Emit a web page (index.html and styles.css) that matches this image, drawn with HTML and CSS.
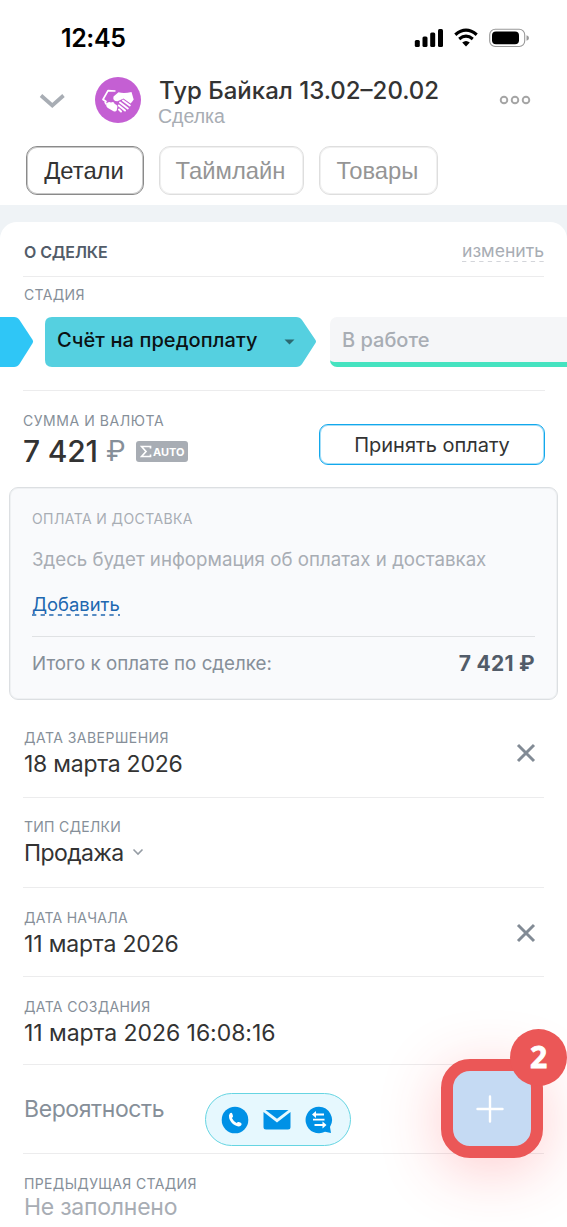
FILE: index.html
```html
<!DOCTYPE html>
<html lang="ru">
<head>
<meta charset="utf-8">
<title>Сделка</title>
<link rel="stylesheet" href="styles.css">
</head>
<body>
<div class="screen">
  <header class="top">
    <div class="status">
      <span class="clock">12:45</span>
      <svg class="status-icons" width="116" height="22" viewBox="0 0 116 22">
        <rect x="0.8" y="13" width="5" height="7" rx="1.5"/>
        <rect x="8.5" y="9.5" width="5" height="10.5" rx="1.5"/>
        <rect x="16.2" y="5.5" width="5" height="14.5" rx="1.5"/>
        <rect x="24" y="2" width="5" height="18" rx="1.5"/>
        <path d="M41.3 7.8Q52 -1.5 62.7 7.8" fill="none" stroke="#000" stroke-width="3.2"/>
        <path d="M45.2 12Q52 6.2 58.8 12" fill="none" stroke="#000" stroke-width="3"/>
        <path d="M48.2 15.6Q52 12.2 55.8 15.6L52 19.6Z"/>
        <rect x="75.7" y="2.2" width="35" height="17.3" rx="5.5" fill="none" stroke="#999" stroke-width="1.1"/>
        <rect x="78" y="4.5" width="27" height="12.8" rx="4"/>
        <path d="M112.5 8.2Q115 9 115 11T112.5 13.8Z" fill="#999"/>
      </svg>
    </div>
    <div class="titlebar">
      <svg class="back" width="26" height="16" viewBox="0 0 26 16"><path d="M2 2.5L13.300 12.500L24.500 2.500" fill="none" stroke="#a8adb4" stroke-width="3.700"/></svg>
      <svg class="avatar" width="46" height="46" viewBox="0 0 46 46">
        <circle cx="23" cy="23" r="23" fill="#c45fd3"/>
        <path d="M11.500 27.500L10.200 25.500L11 24.500L8 22.500L13 13.700L20.500 14" fill="none" stroke="#fff" stroke-width="1.700" stroke-linejoin="round"/>
        <path d="M18.500 19.500L23.500 15.300Q29 17 36.500 15L38.700 22.500Q37.500 24.500 35.500 26.500L28.500 21.500L22.500 24.300Q17.300 24 18.500 19.500Z" fill="#fff"/>
        <path d="M11.300 27.300Q13 24 16 25.500Q19 24 19.700 27Q23.500 28 22 31.500Q22 35.500 18.500 34.200L12.500 30.800Q10.600 29 11.300 27.300Z" fill="#fff"/>
        <path d="M25 25.500L32.800 31.500M28 23.500L34.800 28.500M23.800 28.500L30 33.500M24 32.500L26 34.500" stroke="#fff" stroke-width="2" stroke-linecap="round"/>
      </svg>
      <div class="titles">
        <div class="title"><span>Тур Байкал 13.02–20.02</span></div>
        <div class="subtitle"><span>Сделка</span></div>
      </div>
      <svg class="more" width="32" height="10" viewBox="0 0 32 10" fill="none" stroke="#a5a5a5" stroke-width="1.900"><circle cx="5" cy="5" r="3.300"/><circle cx="16" cy="5" r="3.300"/><circle cx="27" cy="5" r="3.300"/></svg>
    </div>
    <nav class="tabs">
      <div class="tab tab-active"><span>Детали</span></div>
      <div class="tab tab-timeline"><span>Таймлайн</span></div>
      <div class="tab tab-goods"><span>Товары</span></div>
    </nav>
  </header>

  <main class="card">
    <div class="section-head"><span class="section-title">О СДЕЛКЕ</span>
      <span class="edit">изменить<svg class="dash" width="82" height="1"><path d="M0 .5H82" stroke="#d3d5da" stroke-dasharray="4.300 4.300"/></svg></span>
    </div>
    <div class="label stage-label"><span>СТАДИЯ</span></div>
    <div class="stages">
      <svg class="stage-prev" width="34" height="50" viewBox="0 0 34 50"><path d="M0 0H14Q17.500 0 19.500 3L32.700 23Q33.500 24.500 32.700 26L19.500 47Q17.500 50 14 50H0Z" fill="#2fc6f6"/></svg>
      <div class="stage-current">
        <svg class="stage-shape" width="272" height="50" viewBox="0 0 272 50"><path d="M7 0H251Q255 0 257 3L270.500 23Q271.500 24.500 270.500 26L257 47Q255 50 251 50H7Q0 50 0 43V7Q0 0 7 0Z" fill="#55d0e0"/><path d="M239.500 22.500H249.500L244.500 27.500Z" fill="#2b6971"/></svg>
        <span class="stage-name">Счёт на предоплату</span>
      </div>
      <div class="stage-next"><span>В работе</span></div>
    </div>
    <div class="sum">
      <div class="sum-info">
        <div class="label sum-label"><span>СУММА И ВАЛЮТА</span></div>
        <div class="amount"><span class="amount-num">7 421</span><span class="amount-cur">₽</span>
          <span class="auto"><svg width="12" height="13" viewBox="0 0 12 13"><path d="M10.500 3.500V1.500H1.500L6 6.500L1.500 11.500H10.500V9.500" fill="none" stroke="#fff" stroke-width="1.700"/></svg><span>AUTO</span></span>
        </div>
      </div>
      <div class="pay-button"><span>Принять оплату</span></div>
    </div>
    <section class="payments">
      <div class="pay-title"><span>ОПЛАТА И ДОСТАВКА</span></div>
      <div class="pay-text"><span>Здесь будет информация об оплатах и доставках</span></div>
      <div class="pay-add"><span>Добавить</span><svg class="dash" width="88" height="2"><path d="M0 1H88" stroke="#2067b0" stroke-width="1.300" stroke-dasharray="4.300 4.300"/></svg></div>
      <div class="total"><span class="total-label">Итого к оплате по сделке:</span><span class="total-value">7 421 ₽</span></div>
    </section>
    <div class="fields">
      <div class="field field-end"><div><div class="label"><span class="l-end">ДАТА ЗАВЕРШЕНИЯ</span></div><div class="value"><span class="v-end">18 марта 2026</span></div></div>
        <svg class="clear" width="20" height="20" viewBox="0 0 20 20"><path d="M2 2L18 18M18 2L2 18" stroke="#828b95" stroke-width="3"/></svg></div>
      <div class="field field-type"><div><div class="label"><span class="l-type">ТИП СДЕЛКИ</span></div><div class="value"><span class="v-type">Продажа</span><svg class="caret" width="12" height="8" viewBox="0 0 12 8"><path d="M1.500 1.500L6 6L10.500 1.500" fill="none" stroke="#959ca4" stroke-width="1.600"/></svg></div></div></div>
      <div class="field field-start"><div><div class="label"><span class="l-start">ДАТА НАЧАЛА</span></div><div class="value"><span class="v-start">11 марта 2026</span></div></div>
        <svg class="clear" width="20" height="20" viewBox="0 0 20 20"><path d="M2 2L18 18M18 2L2 18" stroke="#828b95" stroke-width="3"/></svg></div>
      <div class="field field-created"><div><div class="label"><span class="l-created">ДАТА СОЗДАНИЯ</span></div><div class="value"><span class="v-created">11 марта 2026 16:08:16</span></div></div></div>
      <div class="field field-prob"><span class="prob">Вероятность</span></div>
      <div class="field field-prev"><div><div class="label"><span class="l-prev">ПРЕДЫДУЩАЯ СТАДИЯ</span></div><div class="value empty"><span class="v-prev">Не заполнено</span></div></div></div>
    </div>
  </main>

  <div class="contact-bar">
    <svg width="28" height="28" viewBox="0 0 28 28"><circle cx="14" cy="14" r="13.300" fill="#0091e6"/><path d="M8.800 7.500Q10.500 6 11.300 7.800L12 10Q12.300 11 10.900 12Q12.500 15.500 15.600 17Q16.800 15.600 17.800 16L19.800 16.700Q21.600 17.800 20 19.400Q17.800 21.500 14 19.300Q9.500 16.800 8.200 12.200Q7.400 9 8.800 7.500Z" fill="#fff"/></svg>
    <svg width="28" height="22" viewBox="0 0 28 22"><path d="M2.500 1H25.500L14 9.800ZM.5 3L14 13.500L27.500 3V18Q27.500 20.500 25 20.500H3Q.5 20.500 .5 18Z" fill="#0091e6"/></svg>
    <svg width="28" height="28" viewBox="0 0 28 28"><path d="M14 .7A13.300 13.300 0 1 0 20 25.800L26 27L25 21A13.300 13.300 0 0 0 14 .7Z" fill="#0091e6"/><path d="M9.500 8.500H19M8 13.700H19.500M9.500 19H19" stroke="#fff" stroke-width="1.800"/><path d="M7 8.500L11 5V12ZM21.500 19L17.500 15.500V22.500Z" fill="#fff"/></svg>
  </div>
  <div class="fab"><svg width="28" height="28" viewBox="0 0 28 28"><path d="M14 1.500V26.500M1.500 14H26.500" stroke="#fff" stroke-width="2.400" stroke-linecap="round"/></svg></div>
  <div class="badge">2</div>
</div>
</body>
</html>
```

FILE: styles.css
```css
* { box-sizing: border-box; }
body { margin: 0; font-family: Inter, "Noto Sans", sans-serif; }
span { white-space: nowrap; }
svg { display: block; flex: none; }

.screen { position: relative; width: 567px; height: 1227px; overflow: hidden; background: #eff3f6; }
.top { height: 205px; background: #fff; }

.status { display: flex; justify-content: space-between; height: 76px; padding: 23px 37px 0 61px; }
.status-icons { margin-top: 4px; }
.clock { font-size: 25px; line-height: 30px; font-weight: 600; letter-spacing: -.4px; color: #000; }

.titlebar { display: flex; height: 70px; padding: 0 36px 0 39px; }
.back { margin-top: 17px; }
.avatar { margin: 1px 18px 0 30px; }
.titles { flex: 1; }
.title { height: 29px; font-size: 24px; line-height: 29px; font-weight: 500; color: #333; }
.subtitle { height: 22px; margin-left: -1px; font-family: "Liberation Sans", sans-serif; font-size: 19.500px; line-height: 22px; color: #a8adb4; }
.more { margin-top: 19px; }

.tabs { display: flex; gap: 15px; padding-left: 26px; }
.tab { display: flex; align-items: center; justify-content: center; width: 118px; height: 49px; padding-right: 2px; border: 1px solid #dedede; border-radius: 11px; box-shadow: inset 0 0 0 1px #f0f0f0; font-family: "Liberation Sans", sans-serif; font-size: 23.800px; color: #959595; }
.tab-active { border-color: #8a8a8a; box-shadow: inset 0 0 0 1px #c8c8c8; color: #333; }
.tab-timeline { width: 145px; }
.tab-goods { width: 119px; }

.card { height: 1010px; margin-top: 17px; border-radius: 17px 17px 0 0; background: #fff; }
.section-head { display: flex; justify-content: space-between; height: 55px; margin: 0 23px; padding: 18px 0 0 1px; border-bottom: 1px solid #ececed; }
.section-title { font-size: 16px; line-height: 24px; font-weight: 600; letter-spacing: -.1px; color: #525c69; }
.edit { font-size: 17.600px; line-height: 21px; color: #a8adb4; }

.label { height: 18px; font-size: 14px; line-height: 18px; letter-spacing: .35px; color: #868f99; }
.stage-label { margin: 9px 0 13px 24px; }
.stages { display: flex; width: 567px; height: 50px; overflow: hidden; }
.stage-prev { margin-right: 11px; }
.stage-current { position: relative; flex: none; width: 272px; height: 50px; margin-right: 13px; padding: 8px 0 0 12px; }
.stage-shape { position: absolute; left: 0; top: 0; }
.stage-name { position: relative; font-size: 20px; line-height: 30px; font-weight: 500; letter-spacing: .08px; color: #0b1214; }
.stage-next { width: 272px; flex: none; padding: 8px 0 0 12px; border-bottom: 5px solid #45e3c0; border-radius: 7px 0 0 7px; background: #f5f6f8; font-size: 20px; line-height: 30px; font-weight: 500; color: #a8adb4; }

.sum { display: flex; justify-content: space-between; height: 97px; margin: 23px 22px 0 23px; border-top: 1px solid #ececed; }
.sum-info { padding-top: 21px; }
.sum-label { letter-spacing: .55px; }
.amount { display: flex; align-items: center; height: 42px; }
.amount-num { width: 75px; font-size: 30px; font-weight: 500; letter-spacing: -.2px; color: #333; }
.amount-cur { width: 19px; margin: 0 11px 0 8px; font-size: 28px; color: #868f99; }
.auto { display: flex; align-items: center; gap: 1px; width: 52px; height: 21px; margin-top: 1px; padding-left: 4px; border-radius: 3px; background: #a8adb4; font-size: 11px; font-weight: 700; color: #fff; }
.pay-button { display: flex; align-items: center; justify-content: center; width: 226px; height: 41px; margin-top: 33px; border: 1px solid #12a8ec; border-radius: 9px; box-shadow: inset 0 0 0 1px #a5def8; font-size: 20px; color: #333; }

.payments { height: 213px; margin: 0 9px; padding: 21px 22px 0; border: 1px solid #dcdfe2; border-radius: 9px; box-shadow: inset 0 0 0 1px #eff1f3; background: #f9fafc; }
.pay-title { height: 20px; font-size: 14px; line-height: 20px; letter-spacing: .4px; color: #a8adb4; }
.pay-text { height: 30px; margin-top: 16px; font-size: 18.700px; line-height: 30px; color: #a8adb4; }
.pay-add { height: 48px; margin-top: 17px; font-size: 18.400px; line-height: 24px; color: #2067b0; }
.pay-add > span { display: block; height: 22px; }
.total { display: flex; justify-content: space-between; height: 56px; margin-top: -4px; padding-top: 12px; border-top: 1px solid #e0e2e4; font-size: 18.750px; line-height: 30px; color: #868f99; }
.total-value { font-size: 21px; font-weight: 700; letter-spacing: .3px; color: #525c69; }

.fields { margin: 0 23px; }
.field { display: flex; justify-content: space-between; height: 90px; padding: 20px 8px 0 1px; border-bottom: 1px solid #ececed; }
.field-end { height: 98px; padding-top: 29px; }
.field-start { height: 89px; padding-top: 21px; }
.field-created { height: 88px; padding-top: 21px; }
.field-prob { height: 89px; padding-top: 29px; }
.field-prev { padding-top: 21px; border: 0; }
.value { display: flex; align-items: center; height: 34px; font-size: 23px; line-height: 34px; letter-spacing: -.25px; color: #333; }
.caret { margin: -2px 0 0 8px; }
.clear { margin-top: 14px; }
.prob { font-size: 23px; line-height: 30px; letter-spacing: -.4px; color: #868f99; }
.empty { height: 28px; color: #a8adb4; }
.l-end { letter-spacing: .47px; }
.l-type, .l-start { letter-spacing: .26px; }
.v-type { letter-spacing: -.6px; }
.v-start { letter-spacing: -.17px; }
.v-created { letter-spacing: -.05px; }

/* floating controls above the form */
.contact-bar { position: absolute; left: 205px; top: 1093px; display: flex; align-items: center; gap: 14px; width: 146px; height: 53px; padding-left: 15px; border: 1px solid #66d5e2; border-radius: 27px; background: #e6f8fe; }
.fab { position: absolute; left: 441px; top: 1059px; display: flex; align-items: center; justify-content: center; width: 102px; height: 99px; padding-right: 4px; border: 12px solid #eb5757; border-radius: 29px; background: #c5daf3; box-shadow: 0 12px 60px rgba(255, 50, 60, .25); }
.badge { position: absolute; left: 510px; top: 1029px; width: 57px; height: 57px; border-radius: 50%; background: #eb5757; font: 700 30px/56px "Open Sans", sans-serif; -webkit-text-stroke: .8px #fff; text-align: center; color: #fff; }
```
